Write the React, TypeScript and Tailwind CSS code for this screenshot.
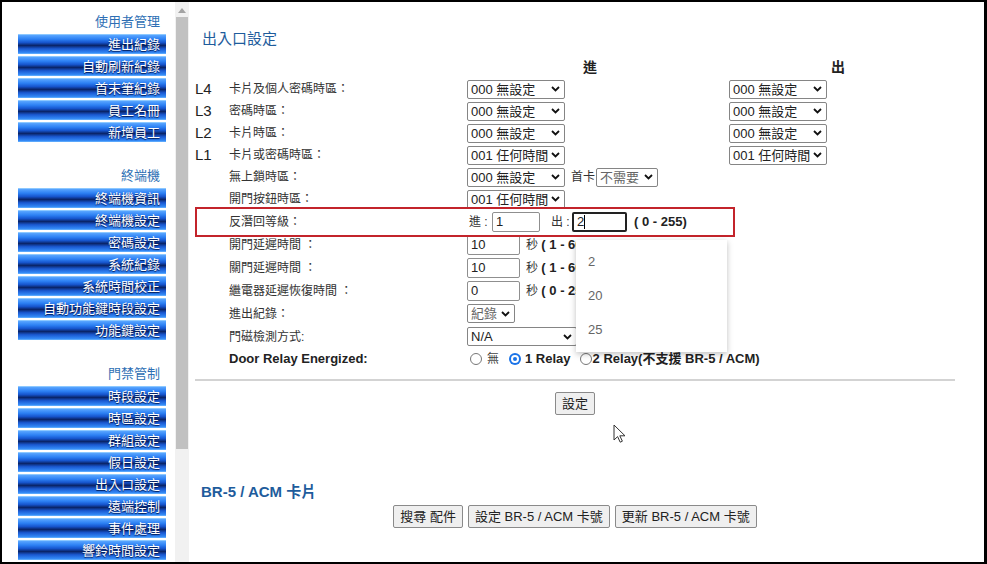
const menu: { title: string; items: string[] }[] = [
  { title: '使用者管理', items: ['進出紀錄', '自動刷新紀錄', '首末筆紀錄', '員工名冊', '新增員工'] },
  {
    title: '終端機',
    items: ['終端機資訊', '終端機設定', '密碼設定', '系統紀錄', '系統時間校正', '自動功能鍵時段設定', '功能鍵設定'],
  },
  {
    title: '門禁管制',
    items: ['時段設定', '時區設定', '群組設定', '假日設定', '出入口設定', '遠端控制', '事件處理', '響鈴時間設定'],
  },
];

function Chevron() {
  return (
    <svg width="9" height="6" viewBox="0 0 9 6" className="shrink-0">
      <path d="M1 1l3.5 3.5L8 1" fill="none" stroke="#111" strokeWidth="1.8" />
    </svg>
  );
}

function Sel({ text, w, muted }: { text: string; w: string; muted?: boolean }) {
  return (
    <div
      className={`${w} h-[19px] border border-[#858585] rounded-[2px] bg-white flex items-center justify-between pl-[3px] pr-[4px] text-[13px] leading-none ${
        muted ? 'text-[#666]' : 'text-[#222]'
      }`}
    >
      <span className="whitespace-nowrap">{text}</span>
      <Chevron />
    </div>
  );
}

function Field({ value, w, focused }: { value: string; w: string; focused?: boolean }) {
  return (
    <div
      className={`${w} h-[20px] rounded-[2px] bg-white flex items-center pl-[3px] text-[13px] text-[#222] leading-none ${
        focused ? 'border-2 border-[#222]' : 'border border-[#8f8f8f]'
      }`}
    >
      {value}
      {focused && <span className="w-px h-[14px] bg-black" />}
    </div>
  );
}

function Radio({ checked }: { checked?: boolean }) {
  return checked ? (
    <span className="shrink-0 w-[12px] h-[12px] rounded-full bg-[#1a73e8] flex items-center justify-center">
      <span className="w-[8px] h-[8px] rounded-full border-2 border-white bg-[#1a73e8]" />
    </span>
  ) : (
    <span className="shrink-0 block w-[12px] h-[12px] rounded-full border border-[#777] bg-white" />
  );
}

function Row({ lv, label, h, children }: { lv?: string; label: React.ReactNode; h: string; children?: React.ReactNode }) {
  return (
    <div className={`${h} flex items-center`}>
      <div className="w-[34px] text-[15px] text-[#222]">{lv}</div>
      <div className="w-[238px] text-[12px] text-[#333]">{label}</div>
      {children}
    </div>
  );
}

function Range({ text }: { text: string }) {
  return (
    <span className="ml-[6px] text-[12px] text-[#333] whitespace-nowrap">
      秒 <b className="text-[13px] text-[#222]">{text}</b>
    </span>
  );
}

function Sidebar() {
  return (
    <div className="w-[173px] shrink-0 pl-[16px] pt-[10px]">
      {menu.map((sec, i) => (
        <div key={sec.title} className={i > 0 ? 'mt-[24px]' : ''}>
          <div className="h-[20px] w-[148px] pr-[6px] flex items-center justify-end text-[13px] text-[#2e6fb4]">
            {sec.title}
          </div>
          <div className="mt-[2px] flex flex-col gap-[2px]">
            {sec.items.map((it) => (
              <div
                key={it}
                className="w-[148px] h-[20px] border-t border-[#8cc8ff] bg-[linear-gradient(to_bottom,#5aa6ff_0%,#2c80f4_22%,#1654cc_40%,#0a2468_55%,#1a58d0_72%,#3287f4_92%,#6db6ff_100%)] flex items-center justify-end pr-[6px] text-[13px] text-white [text-shadow:0_1px_1px_#001a55] whitespace-nowrap"
              >
                {it}
              </div>
            ))}
          </div>
        </div>
      ))}
    </div>
  );
}

function Scrollbar() {
  return (
    <div className="w-[14px] shrink-0 bg-[#f1f1f1] flex flex-col items-center">
      <svg width="8" height="5" viewBox="0 0 8 5" className="mt-[6px]">
        <path d="M0 5L4 0l4 5z" fill="#a3a3a3" />
      </svg>
      <div className="mt-[4px] w-[12px] h-[432px] bg-[#c1c1c1]" />
    </div>
  );
}

function Btn({ children }: { children: React.ReactNode }) {
  return (
    <div className="h-[23px] px-[6px] border border-[#8a8a8a] rounded-[2px] bg-[#efefef] flex items-center text-[13px] text-[#222] whitespace-nowrap">
      {children}
    </div>
  );
}

export default function App() {
  return (
    <div className="w-[987px] h-[564px] border-2 border-r-[3px] border-black bg-white overflow-hidden flex font-['Liberation_Sans','Noto_Sans_CJK_TC',sans-serif]">
      <Sidebar />
      <Scrollbar />
      <div className="flex-1 pl-[6px] pr-[29px] pt-[26px] relative">
        <div className="h-[22px] pl-[7px] flex items-center text-[15px] text-[#1e5c9c]">出入口設定</div>

        <div className="mt-[6px] h-[22px] flex items-center font-bold text-[14px] text-[#222]">
          <div className="w-[272px]" />
          <div className="w-[262px] pl-[116px]">進</div>
          <div className="pl-[102px]">出</div>
        </div>

        <Row lv="L4" label="卡片及個人密碼時區：" h="h-[22px]">
          <div className="w-[262px]"><Sel text="000 無設定" w="w-[98px]" /></div>
          <Sel text="000 無設定" w="w-[98px]" />
        </Row>
        <Row lv="L3" label="密碼時區：" h="h-[22px]">
          <div className="w-[262px]"><Sel text="000 無設定" w="w-[98px]" /></div>
          <Sel text="000 無設定" w="w-[98px]" />
        </Row>
        <Row lv="L2" label="卡片時區：" h="h-[22px]">
          <div className="w-[262px]"><Sel text="000 無設定" w="w-[98px]" /></div>
          <Sel text="000 無設定" w="w-[98px]" />
        </Row>
        <Row lv="L1" label="卡片或密碼時區：" h="h-[22px]">
          <div className="w-[262px]"><Sel text="001 任何時間" w="w-[98px]" /></div>
          <Sel text="001 任何時間" w="w-[98px]" />
        </Row>
        <Row label="無上鎖時區：" h="h-[22px]">
          <Sel text="000 無設定" w="w-[98px]" />
          <span className="ml-[6px] mr-[1px] text-[12px] text-[#333]">首卡</span>
          <Sel text="不需要" w="w-[62px]" muted />
        </Row>
        <Row label="開門按鈕時區：" h="h-[22px]">
          <Sel text="001 任何時間" w="w-[98px]" />
        </Row>

        <div className="relative">
          <Row label="反潛回等級：" h="h-[23px]">
            <span className="w-[23px] ml-[2px] text-[12px] text-[#333] whitespace-nowrap">進 :</span>
            <Field value="1" w="w-[48px]" />
            <span className="w-[21px] ml-[11px] text-[12px] text-[#333] whitespace-nowrap">出 :</span>
            <Field value="2" w="w-[55px]" focused />
            <b className="ml-[7px] text-[13px] text-[#222] whitespace-nowrap">( 0 - 255)</b>
          </Row>
          {/* highlight frame around the anti-passback row */}
          <div className="absolute left-0 top-[-3px] w-[540px] h-[30px] border-2 border-[#c3242b] pointer-events-none" />
          {/* autocomplete list of the focused field */}
          <div className="absolute left-[381px] top-[30px] w-[151px] h-[112px] bg-white z-10 shadow-[0_2px_6px_rgba(0,0,0,0.25)] pt-[5px] text-[13px] text-[#666]">
            {['2', '20', '25'].map((v) => (
              <div key={v} className="h-[34px] pl-[12px] flex items-center">{v}</div>
            ))}
          </div>
        </div>

        <Row label="開門延遲時間 ：" h="h-[23px]">
          <Field value="10" w="w-[53px]" />
          <Range text="( 1 - 60 )" />
        </Row>
        <Row label="關門延遲時間 ：" h="h-[23px]">
          <Field value="10" w="w-[53px]" />
          <Range text="( 1 - 60 )" />
        </Row>
        <Row label="繼電器延遲恢復時間 ：" h="h-[23px]">
          <Field value="0" w="w-[53px]" />
          <Range text="( 0 - 250 )" />
        </Row>
        <Row label="進出紀錄：" h="h-[23px]">
          <Sel text="紀錄" w="w-[48px]" muted />
        </Row>
        <Row label="門磁檢測方式:" h="h-[23px]">
          <Sel text="N/A" w="w-[110px]" />
        </Row>
        <Row label={<b className="text-[13px] text-[#222]">Door Relay Energized:</b>} h="h-[22px]">
          <div className="flex items-center ml-[3px] text-[13px] text-[#222] whitespace-nowrap">
            <Radio />
            <span className="ml-[5px] text-[12px] text-[#444]">無</span>
            <span className="ml-[10px] flex"><Radio checked /></span>
            <b className="ml-[4px]">1 Relay</b>
            <span className="ml-[9px] flex"><Radio /></span>
            <b className="ml-[1px]">2 Relay(不支援 BR-5 / ACM)</b>
          </div>
        </Row>

        <div className="mt-[9px] h-[2px] bg-[#d3d3d3]" />

        <div className="mt-[11px] flex justify-center">
          <Btn>設定</Btn>
        </div>

        <div className="mt-[66px] h-[22px] pl-[6px] flex items-center font-bold text-[15px] text-[#1e5c9c]">BR-5 / ACM 卡片</div>
        <div className="mt-[2px] flex justify-center gap-[5px]">
          <Btn>搜尋 配件</Btn>
          <Btn>設定 BR-5 / ACM 卡號</Btn>
          <Btn>更新 BR-5 / ACM 卡號</Btn>
        </div>

        {/* mouse pointer */}
        <svg width="13" height="19" viewBox="0 0 13 19" className="absolute left-[424px] top-[422px]">
          <path d="M1 1v15l3.6-3.4 2.6 5.6 2.2-1-2.6-5.4H12z" fill="#fff" stroke="#333" strokeWidth="1" strokeLinejoin="round" />
        </svg>
      </div>
    </div>
  );
}
